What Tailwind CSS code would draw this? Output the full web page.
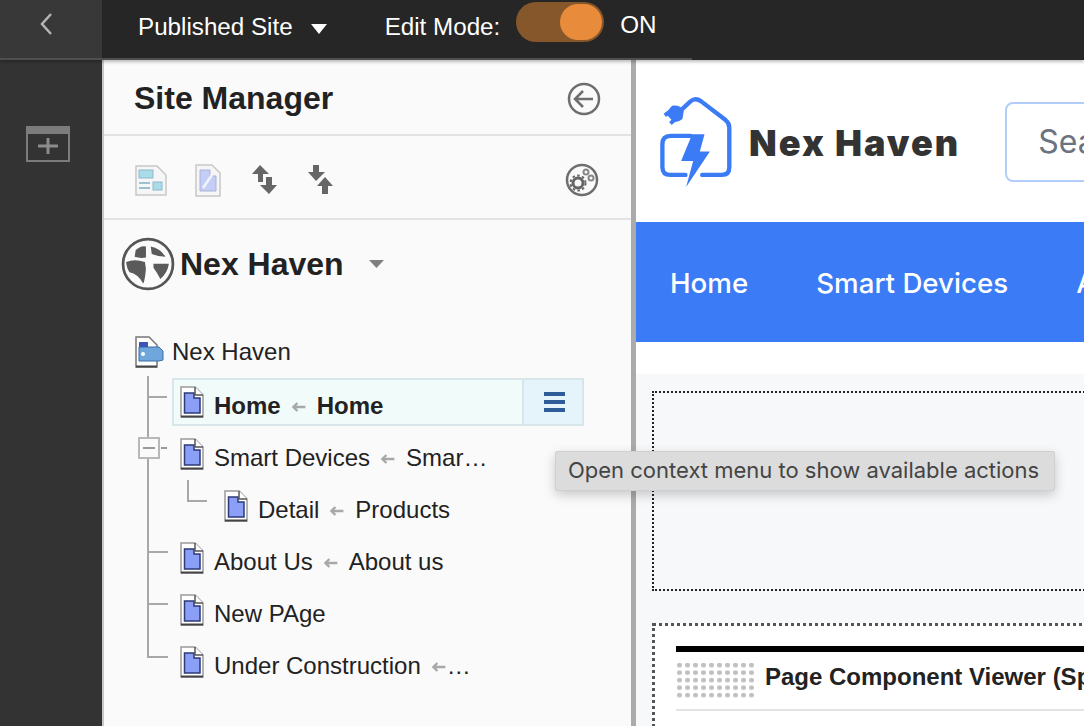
<!DOCTYPE html>
<html lang="en">
<head>
<meta charset="UTF-8" />
<title>Site Manager</title>
<script src="https://cdn.jsdelivr.net/npm/@tailwindcss/browser@4"></script>
</head>
<body class="w-[1084px] h-[726px] overflow-hidden relative bg-white font-['Liberation_Sans',Arial,sans-serif] text-[#222]">

<!-- shared icons -->
<svg class="hidden" width="0" height="0">
  <symbol id="page" viewBox="0 0 24 32">
    <path d="M1 1H15L23 9V31H1Z" fill="#fff" stroke="#9a9a9a" stroke-width="1.500"/>
    <path d="M1 30.500H23" stroke="#444" stroke-width="2"/>
    <path d="M4.500 7H14V12H20V27H4.500Z" fill="#8b9ff6" stroke="#2c3a78" stroke-width="1.500"/>
    <path d="M15 1V9H23" fill="#fff" stroke="#555" stroke-width="1.500"/>
  </symbol>
  <symbol id="arrow" viewBox="0 0 20 14">
    <path d="M8 2L3 7L8 12M3 7H18" fill="none" stroke="#a8a8a8" stroke-width="3"/>
  </symbol>
</svg>

<!-- top bar -->
<header class="h-[60px] flex bg-[#262626] text-white relative z-10 shadow-[0_2px_3px_rgba(0,0,0,0.25)]">
  <div class="w-[102px] h-[60px] bg-[#383838] border-b-2 border-[#4f4f4f] flex justify-center pt-3 pr-[10px]">
    <svg width="14" height="24" viewBox="0 0 14 24"><path d="M12 2L3 12L12 22" fill="none" stroke="#b4b4b4" stroke-width="2.500"/></svg>
  </div>
  <div class="w-[590px] h-[60px] border-b-2 border-[#4f4f4f] flex items-center pb-1 pl-9">
    <span class="text-[24.200px]">Published Site</span>
    <svg class="ml-[18px] mt-1" width="16" height="10" viewBox="0 0 16 10"><path d="M0 0H16L8 10Z" fill="#fff"/></svg>
    <span class="text-[24.200px] ml-[58px]">Edit Mode:</span>
    <span class="ml-4 w-[88px] h-10 rounded-full bg-[#85572a] flex justify-end items-center pr-[2px] -mt-[10px]">
      <span class="w-[42px] h-9 rounded-full bg-[#e88b3a]"></span>
    </span>
    <span class="text-[24.200px] ml-4 -mt-1">ON</span>
  </div>
</header>

<div class="flex h-[666px]">
  <!-- left rail -->
  <aside class="w-[102px] bg-[#333] flex justify-center pt-[66px] pr-[6px]">
    <svg width="44" height="36" viewBox="0 0 44 36">
      <rect x="1" y="1" width="42" height="34" fill="none" stroke="#7c7c7c" stroke-width="2"/>
      <rect x="0" y="0" width="44" height="8" fill="#7c7c7c"/>
      <path d="M22 12V28M12 20H32" stroke="#8c8c8c" stroke-width="3"/>
    </svg>
  </aside>

  <!-- site manager panel -->
  <section class="w-[534px] bg-[#fafafa] border-l-2 border-r-[5px] border-l-[#c8c8c8] border-r-[#ababab] relative">
    <div class="h-[76px] border-b-2 border-[#e3e3e3] flex items-center justify-between pl-[30px] pr-[30px] pt-1">
      <h1 class="text-[32px] font-bold -mt-[2px]">Site Manager</h1>
      <svg width="34" height="34" viewBox="0 0 34 34"><circle cx="17" cy="17" r="15" fill="none" stroke="#6e6e6e" stroke-width="2.500"/><path d="M16 9L8 17L16 25M8 17H26" fill="none" stroke="#6e6e6e" stroke-width="2.500"/></svg>
    </div>
    <div class="h-[84px] border-b-2 border-[#e3e3e3] flex items-center pl-[31px] pr-[32px] pt-[6px]">
      <svg width="32" height="32" viewBox="0 0 32 32">
        <path d="M1 2H22L31 11V31H1Z" fill="#f4f6f7" stroke="#c8c8c8" stroke-width="1.500"/>
        <rect x="4" y="6" width="14" height="8" fill="#a9dcea" stroke="#8fb8c8"/>
        <rect x="18" y="18" width="9" height="8" fill="#a9dcea" stroke="#8fb8c8"/>
        <path d="M4 19H15M4 24H15" stroke="#9cc0d0" stroke-width="2"/>
      </svg>
      <svg class="ml-7" width="26" height="33" viewBox="0 0 26 33">
        <path d="M1 1H17L25 9V32H1Z" fill="#f6f6f6" stroke="#c8c8c8" stroke-width="1.500"/>
        <path d="M5 6H15V12H21V27H5Z" fill="#c3cdf6" stroke="#a9b2d8"/>
        <path d="M8 24L17 11" stroke="#eef0fb" stroke-width="3"/>
      </svg>
      <svg class="ml-[30px]" width="28" height="32" viewBox="0 0 28 32"><path d="M9 1L18 10H12V18H7V10H1ZM18 30L26 21H21V13H15V21H9Z" fill="#666"/></svg>
      <svg class="ml-[28px]" width="27" height="32" viewBox="0 0 27 32"><path d="M9 17L1 8H6V1H12V8H18ZM18 13L26 22H21V30H15V22H10Z" fill="#666"/></svg>
      <svg class="ml-auto" width="34" height="34" viewBox="0 0 34 34">
        <circle cx="17" cy="17" r="15" fill="none" stroke="#6e6e6e" stroke-width="2.500"/>
        <circle cx="13" cy="20" r="5" fill="none" stroke="#666" stroke-width="3"/>
        <circle cx="13" cy="20" r="7.500" fill="none" stroke="#666" stroke-width="2" stroke-dasharray="2.500 2.400"/>
        <circle cx="21" cy="9" r="2.500" fill="none" stroke="#888" stroke-width="2"/>
        <circle cx="26" cy="15" r="2.500" fill="none" stroke="#888" stroke-width="2"/>
      </svg>
    </div>
    <div class="flex items-center h-[90px] pl-[17px] pb-[2px]">
      <svg width="54" height="56" viewBox="35 20 158 162">
        <circle cx="114" cy="101" r="73" fill="#fafafa" stroke="#555" stroke-width="8"/>
        <path d="M78 60Q95 45 108 50L108 82Q90 85 75 80ZM122 50Q150 55 165 80Q145 80 125 72ZM50 95Q75 85 105 95L108 115Q105 150 100 158Q85 130 60 125Q52 115 50 95ZM130 100L175 100Q172 125 150 145Q140 125 130 112Z" fill="#5a5a5a"/>
      </svg>
      <span class="text-[32px] font-bold ml-[5px]">Nex Haven</span>
      <svg class="ml-[25px]" width="15" height="8" viewBox="0 0 15 8"><path d="M0 0H15L7.500 8Z" fill="#808080"/></svg>
    </div>

    <!-- tree -->
    <ul class="text-[24px] relative pt-[16px]">
      <svg class="absolute left-0 top-0" width="120" height="360" viewBox="0 0 120 360" fill="none" stroke="#a8a8a8" stroke-width="2">
        <path d="M44 66V127M44 148V347H64M44 87H63M44 242H64M44 294H64M84 170V191H103"/>
        <rect x="35" y="128" width="20" height="20" stroke="#b8b8b8" fill="#fafafa"/>
        <path d="M39 138H51M57 138H63" stroke="#999"/>
      </svg>
      <li class="h-[52px] flex items-center pl-[31px]">
        <svg width="30" height="32" viewBox="0 0 30 32">
          <path d="M1 1H14L22 9V31H1Z" fill="#fff" stroke="#777" stroke-width="1.500"/>
          <path d="M1 30.500H22" stroke="#444" stroke-width="2"/>
          <path d="M4 11H24L28 15V24L24 25H4Z" fill="#6fa6dc" stroke="#3b6da8"/>
          <path d="M4 6H13V11H4Z" fill="#3d55b8"/>
          <circle cx="8" cy="18" r="2" fill="#fff"/>
        </svg>
        <span class="ml-[7px]">Nex Haven</span>
      </li>
      <li class="h-[48px] mb-[4px] ml-[68px] mr-[47px] flex items-center bg-[#f1fbfa] border-2 border-[#d7e6e8] font-bold">
        <svg class="ml-[6px]" width="24" height="32"><use href="#page"/></svg>
        <span class="ml-[10px] mt-2">Home</span>
        <svg class="ml-[10px] mt-[10px]" width="16" height="12"><use href="#arrow"/></svg>
        <span class="ml-[10px] mt-2">Home</span>
        <span class="ml-auto w-[60px] h-full bg-[#e4f4fa] border-l-2 border-[#d7e6e8] flex items-center justify-center pl-[2px]">
          <svg width="21" height="20" viewBox="0 0 21 20"><path d="M0 2H21M0 10H21M0 18H21" stroke="#2f5c96" stroke-width="4"/></svg>
        </span>
      </li>
      <li class="h-[52px] flex items-center pl-[76px]">
        <svg class="-mt-1" width="24" height="32"><use href="#page"/></svg>
        <span class="ml-[10px] mt-1">Smart Devices</span>
        <svg class="ml-[10px] mt-[6px]" width="16" height="12"><use href="#arrow"/></svg>
        <span class="ml-[10px] mt-1">Smar…</span>
      </li>
      <li class="h-[52px] flex items-center pl-[120px]">
        <svg class="-mt-1" width="24" height="32"><use href="#page"/></svg>
        <span class="ml-[10px] mt-1">Detail</span>
        <svg class="ml-[10px] mt-[6px]" width="16" height="12"><use href="#arrow"/></svg>
        <span class="ml-[10px] mt-1">Products</span>
      </li>
      <li class="h-[52px] flex items-center pl-[76px]">
        <svg class="-mt-1" width="24" height="32"><use href="#page"/></svg>
        <span class="ml-[10px] mt-1">About Us</span>
        <svg class="ml-[10px] mt-[6px]" width="16" height="12"><use href="#arrow"/></svg>
        <span class="ml-[10px] mt-1">About us</span>
      </li>
      <li class="h-[52px] flex items-center pl-[76px]">
        <svg class="-mt-1" width="24" height="32"><use href="#page"/></svg>
        <span class="ml-[10px] mt-1">New PAge</span>
      </li>
      <li class="h-[52px] flex items-center pl-[76px]">
        <svg class="-mt-1" width="24" height="32"><use href="#page"/></svg>
        <span class="ml-[10px] mt-1">Under Construction</span>
        <svg class="ml-[10px] mt-[6px]" width="16" height="12"><use href="#arrow"/></svg>
        <span class="mt-1">…</span>
      </li>
    </ul>
  </section>

  <!-- site preview -->
  <main class="flex-1 min-w-0 overflow-hidden bg-[#f7f8fa] font-['Inter',sans-serif]">
    <div class="h-[162px] bg-white flex items-center pl-[21px]">
      <svg class="shrink-0 mt-[2px]" width="77" height="97" viewBox="50 40 230 290">
        <g fill="none" stroke="#3b7cf6" stroke-width="13" stroke-linecap="round" stroke-linejoin="round">
          <path d="M125 85L150 62Q165 50 182 62L255 118Q266 127 266 140V260Q266 282 244 282H185"/>
          <path d="M150 165H90Q66 165 66 190V258Q66 282 90 282H135"/>
          <path d="M92 90L73 104M108 112L90 128" stroke-width="12" stroke-linecap="butt"/>
        </g>
        <path d="M155 160H192L178 212H208L137 318L158 240H122Z" fill="#3b7cf6"/>
        <path d="M95 75Q120 72 130 90L126 115Q110 128 98 122L82 105Q82 85 95 75Z" fill="#3b7cf6"/>
      </svg>
      <span class="ml-[15px] mt-[4px] text-[36px] font-black tracking-[2px] text-[#333] whitespace-nowrap">Nex Haven</span>
      <div class="ml-[45px] mt-[2px] w-[200px] h-20 shrink-0 rounded-lg border-2 border-[#b3cdfb] flex items-center pl-[31px] text-[32px] text-[#6b7280]">Search</div>
    </div>
    <nav class="h-[120px] bg-[#3b7cf6] flex items-center pl-[34px] pt-1 gap-[68px] text-[27.700px] text-white font-medium whitespace-nowrap">
      <span>Home</span><span>Smart Devices</span><span>About Us</span>
    </nav>
    <div class="h-8 bg-white"></div>
    <div class="pl-4 pt-[17px]">
      <div class="h-[200px] w-[600px] border-2 border-dotted border-[#222]"></div>
      <div class="mt-8 w-[600px] h-[200px] border-[3px] border-dotted border-[#555] bg-white pl-[21px] pt-5 font-['Liberation_Sans',Arial,sans-serif]">
        <div class="h-[6px] bg-black"></div>
        <div class="flex items-center h-[59px] border-b-2 border-[#e3e3e3]">
          <svg class="shrink-0" width="80" height="38" viewBox="0 0 80 38">
            <defs><pattern id="dots" width="8" height="7.500" patternUnits="userSpaceOnUse"><rect x="1" y="1" width="5" height="4.500" rx="2" fill="#c0c0c0"/></pattern></defs>
            <rect width="80" height="38" fill="url(#dots)"/>
          </svg>
          <span class="ml-[9px] -mt-2 text-[24px] font-bold whitespace-nowrap">Page Component Viewer (Sp</span>
        </div>
      </div>
    </div>
  </main>
</div>

<!-- tooltip -->
<div class="absolute z-20 left-[555px] top-[451px] h-10 pl-[12px] pr-[15px] pb-[2px] flex items-center whitespace-nowrap rounded-[2px] bg-[#dcdcdc] border border-[#d0d0d0] shadow-[0_4px_12px_rgba(0,0,0,0.2)] text-[#444] text-[22px] font-['Inter',sans-serif]">Open context menu to show available actions</div>

</body>
</html>
